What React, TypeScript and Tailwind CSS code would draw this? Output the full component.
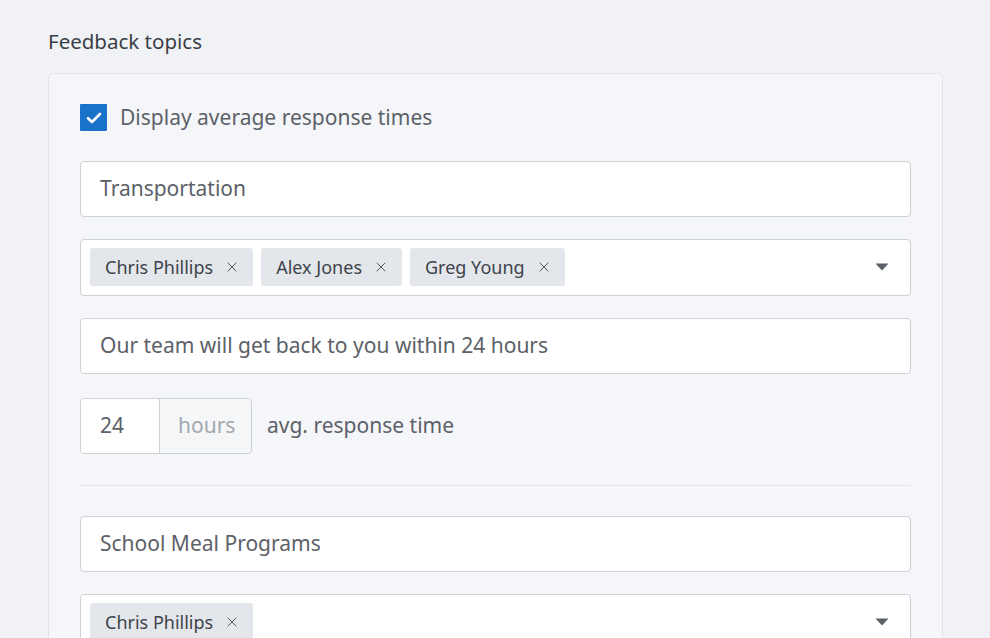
import { X } from 'lucide-react';

const font = { fontFamily: '"Noto Sans", "Open Sans", sans-serif' };

function Tag({ name }: { name: string }) {
    return (
        <span className="flex items-center h-[38px] pl-[15px] pr-[13px] gap-[11px] rounded-[3px] bg-[#e3e6ea] text-[18px] text-[#3e434a]">
            {name}
            <X className="w-[16px] h-[16px] text-[#555a60]" strokeWidth={1.5} />
        </span>
    );
}

function TextBox({ value }: { value: string }) {
    return (
        <div className="h-[56px] flex items-center px-[19px] bg-white border border-[#cdd0d4] rounded-[4px] text-[21px] text-[#5c6168]">
            {value}
        </div>
    );
}

function TagSelect({ names }: { names: string[] }) {
    return (
        <div className="h-[57px] flex items-center pl-[9px] pr-[21px] bg-white border border-[#cdd0d4] rounded-[4px]">
            <div className="flex flex-1 gap-[8px]">
                {names.map((n) => (
                    <Tag key={n} name={n} />
                ))}
            </div>
            <svg width="14" height="8" viewBox="0 0 14 8" className="shrink-0">
                <path d="M0.5 0.5 L13.5 0.5 L7 7.5 Z" fill="#5b6067" />
            </svg>
        </div>
    );
}

export default function App() {
    return (
        <div className="min-h-[638px] w-full bg-[#f1f2f6] pt-[26px] pl-[48px] pr-[47px]" style={font}>
            <h2 className="text-[20.5px] leading-[30px] text-[#3a3f46] mb-[17px]">Feedback topics</h2>

            <div className="bg-[#f5f6f9] border border-[#e2e4e8] rounded-[5px] pt-[28px] pl-[31px] pr-[31px] pb-[40px]">
                {/* Display toggle */}
                <label className="flex items-center gap-[13px] mb-[27px]">
                    <span className="w-[27px] h-[27px] bg-[#1a73c9] flex items-center justify-center rounded-[1px]">
                        <svg width="16" height="12" viewBox="0 0 16 12">
                            <path d="M2 6.2 L6 10 L14 2" fill="none" stroke="white" strokeWidth="2.6" strokeLinecap="round" strokeLinejoin="round" />
                        </svg>
                    </span>
                    <span className="text-[21px] text-[#5c6168]">Display average response times</span>
                </label>

                {/* Topic 1 */}
                <div className="flex flex-col gap-[22px]">
                    <TextBox value="Transportation" />
                    <TagSelect names={['Chris Phillips', 'Alex Jones', 'Greg Young']} />
                    <TextBox value="Our team will get back to you within 24 hours" />
                    <div className="flex items-center gap-[15px] mt-[2px]">
                        <div className="flex h-[56px] border border-[#cdd0d4] rounded-[4px] overflow-hidden text-[21px]">
                            <span className="w-[79px] flex items-center pl-[19px] bg-white text-[#5c6168] border-r border-[#cdd0d4]">24</span>
                            <span className="w-[91px] flex items-center pl-[18px] bg-[#f5f6f8] text-[#a3a8ae]">hours</span>
                        </div>
                        <span className="text-[21px] text-[#5c6168]">avg. response time</span>
                    </div>
                </div>

                <div className="border-t border-[#e3e5e9] mt-[31px] mb-[30px]" />

                {/* Topic 2 */}
                <div className="flex flex-col gap-[22px]">
                    <TextBox value="School Meal Programs" />
                    <TagSelect names={['Chris Phillips']} />
                </div>
            </div>
        </div>
    );
}
